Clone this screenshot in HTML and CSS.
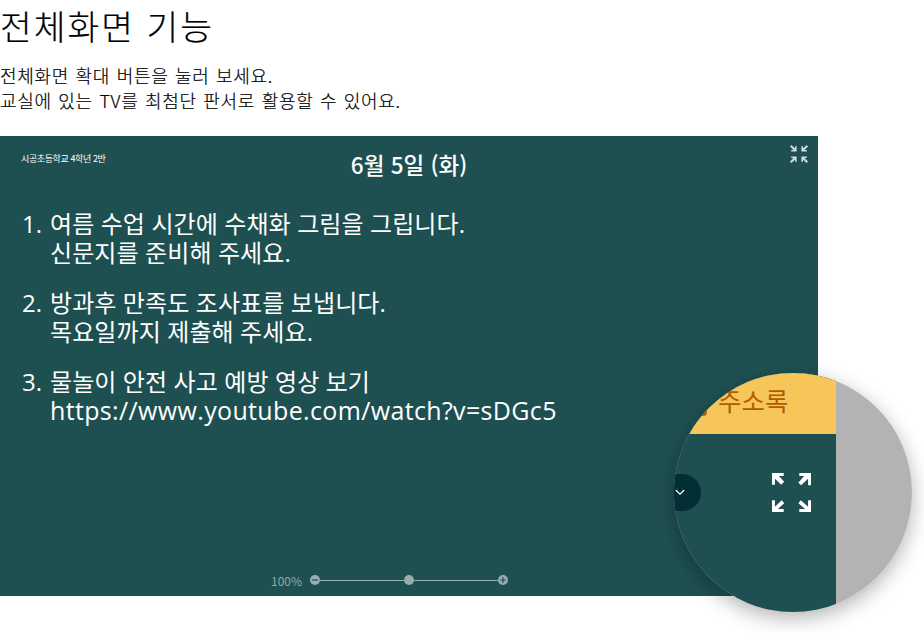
FILE: index.html
```html
<!DOCTYPE html>
<html lang="ko">
<head>
<meta charset="utf-8">
<title>전체화면 기능</title>
<link rel="stylesheet" href="styles.css">
</head>
<body>
<h1 class="title">전체화면 기능</h1>
<p class="intro">전체화면 확대 버튼을 눌러 보세요.<br>교실에 있는 TV를 최첨단 판서로 활용할 수 있어요.</p>
<section class="board">
  <header class="board-head">
    <span class="school">시공초등학교 4학년 2반</span>
    <h2 class="date">6월 5일 (화)</h2>
    <svg class="shrink" width="18" height="18" viewBox="0 0 18 18" fill="#fff"><path d="M0 1.500 1.500 0 5 3.500V1.200H6.600V6.600H1.200V5H3.500Z"/><path d="M18 1.500 16.500 0 13 3.500V1.200H11.400V6.600H16.800V5H14.500Z"/><path d="M0 16.500 1.500 18 5 14.500V16.800H6.600V11.400H1.200V13H3.500Z"/><path d="M18 16.500 16.500 18 13 14.500V16.800H11.400V11.400H16.800V13H14.500Z"/></svg>
  </header>
  <ol class="notes">
    <li><span class="num">1.</span><span>여름 수업 시간에 수채화 그림을 그립니다.<br>신문지를 준비해 주세요.</span></li>
    <li><span class="num">2.</span><span>방과후 만족도 조사표를 보냅니다.<br>목요일까지 제출해 주세요.</span></li>
    <li><span class="num">3.</span><span>물놀이 안전 사고 예방 영상 보기<br><span class="url">https://www.youtube.com/watch?v=sDGc5</span></span></li>
  </ol>
  <div class="zoom-bar">
    <span class="zoom-label">100%</span>
    <div class="zoom-track">
      <span class="zoom-dot"><svg width="10" height="10" viewBox="0 0 10 10"><path d="M2 5H8" stroke="#1e5052" stroke-width="1.200"/></svg></span>
      <span class="zoom-line"></span>
      <span class="zoom-dot"></span>
      <span class="zoom-line"></span>
      <span class="zoom-dot"><svg width="10" height="10" viewBox="0 0 10 10"><path d="M2 5H8M5 2V8" stroke="#1e5052" stroke-width="1.200"/></svg></span>
    </div>
  </div>
</section>
<aside class="lens">
  <div class="lens-clip">
    <div class="lens-main">
      <div class="lens-top"><span class="lens-bullet"></span><span class="lens-label">주소록</span></div>
      <div class="lens-body">
        <span class="lens-tab"><svg width="10" height="7" viewBox="0 0 10 7" fill="none"><path d="M.8 1 5 5.200 9.200 1" stroke="#fff" stroke-width="1.200"/></svg></span>
        <svg class="expand" width="39" height="39" viewBox="0 0 40 40" fill="#fff"><path d="M0 0H12V3L7 3.200 12.500 9 9.500 12 3 5.800V12H0Z"/><path d="M40 0H28V3L33 3.200 27 10 30 12.500 37 5.800V12.500H40Z"/><path d="M0 40H12V37H6L12.500 31 10 28 3 34.500V28H0Z"/><path d="M40 40H28V37H34L27 31 29.500 28 37 34.500V28H40Z"/></svg>
      </div>
    </div>
  </div>
</aside>
</body>
</html>
```
FILE: styles.css
```css
* { box-sizing: border-box; }
html, body { margin: 0; padding: 0; }
body {
  position: relative;
  width: 924px;
  height: 633px;
  overflow: hidden;
  background: #fff;
  color: #000;
  font-family: "Noto Sans CJK KR", "Noto Sans", sans-serif;
}
.title {
  margin: 0;
  height: 63px;
  font-size: 34.500px;
  font-weight: 300;
  line-height: 50px;
  letter-spacing: 2px;
  -webkit-text-stroke: 0.2px #000;
}
.intro {
  margin: 0;
  height: 73px;
  font-size: 18px;
  font-weight: 300;
  line-height: 25px;
  letter-spacing: 0.7px;
  word-spacing: 0.8px;
  -webkit-text-stroke: 0.2px #000;
}
.board {
  display: flex;
  flex-direction: column;
  width: 818px;
  height: 460px;
  background: #1e5052;
  color: #fff;
}
.board-head {
  position: relative;
  display: flex;
  justify-content: center;
  height: 60px;
  padding-top: 12px;
}
.school {
  position: absolute;
  left: 21px;
  top: 16px;
  font-size: 9px;
  line-height: 13px;
  letter-spacing: -0.4px;
}
.date {
  margin: 0;
  font-size: 22.500px;
  font-weight: 500;
  line-height: 32px;
}
.shrink {
  position: absolute;
  left: 790px;
  top: 9px;
  opacity: .8;
}
.notes {
  flex: 1;
  margin: 0;
  padding: 13px 0 0 22px;
  list-style: none;
  font-family: "Open Sans", "Noto Sans CJK KR", sans-serif;
  font-size: 24px;
  font-weight: 400;
  line-height: 29px;
  letter-spacing: 0.1px;
}
.notes li {
  display: flex;
  margin-bottom: 21px;
}
.num { width: 28px; }
.url {
  font-size: 25px;
  line-height: 27px;
  letter-spacing: 0.35px;
}
.zoom-bar {
  display: flex;
  align-items: center;
  gap: 8px;
  height: 30px;
  margin-bottom: 1px;
  padding-left: 271px;
  color: #8fa8a8;
  font-size: 12px;
}
.zoom-track {
  display: flex;
  align-items: center;
  width: 198px;
}
.zoom-dot {
  display: flex;
  width: 10px;
  height: 10px;
  flex: none;
  border-radius: 50%;
  background: #98adad;
}
.zoom-line {
  flex: 1;
  height: 1px;
  background: #98adad;
}
.lens {
  position: absolute;
  left: 674px;
  top: 373px;
  width: 238px;
  height: 239px;
  border-radius: 50%;
  box-shadow: 0 6px 20px rgba(0,0,0,.3);
}
.lens-clip {
  width: 100%;
  height: 100%;
  overflow: hidden;
  border-radius: 50%;
  background: #b3b3b3;
}
.lens-main {
  display: flex;
  flex-direction: column;
  width: 162px;
  height: 100%;
  background: #1e5052;
}
.lens-top {
  display: flex;
  align-items: center;
  gap: 11px;
  height: 61px;
  padding: 0 0 9px 25px;
  background: #f6c65b;
  color: #b15c00;
  font-size: 25.500px;
}
.lens-bullet {
  width: 8px;
  height: 8px;
  margin-top: 25px;
  border-radius: 50%;
  background: #b15c00;
}
.lens-body { position: relative; flex: 1; }
.lens-tab {
  position: absolute;
  left: 0;
  top: 40px;
  display: flex;
  align-items: center;
  justify-content: flex-start;
  width: 27px;
  height: 37px;
  padding-left: 1px;
  border-radius: 0 19px 19px 0;
  background: #032e33;
}
.expand {
  position: absolute;
  left: 98px;
  top: 39px;
}
```
